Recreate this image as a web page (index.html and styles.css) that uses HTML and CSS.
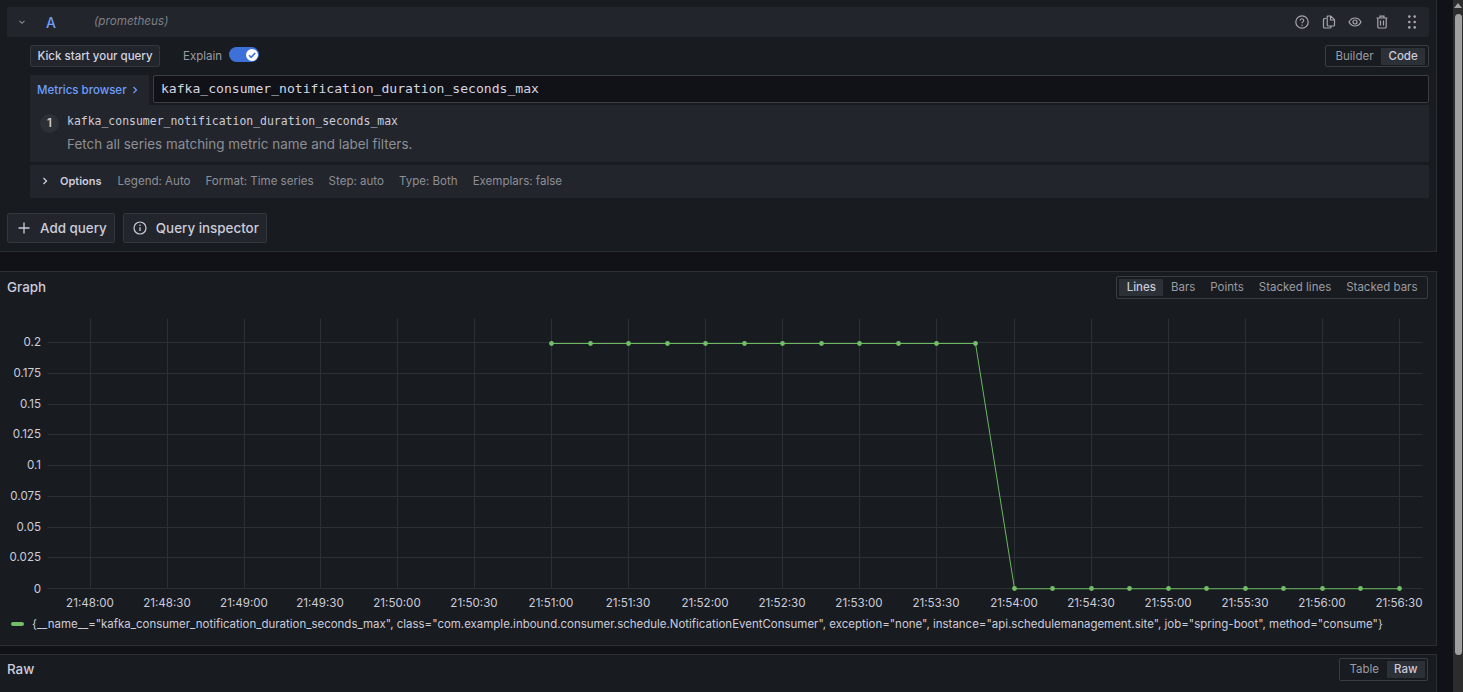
FILE: index.html
```html
<!DOCTYPE html>
<html lang="en">
<head>
<meta charset="utf-8">
<title>Explore</title>
<link rel="stylesheet" href="styles.css">
</head>
<body>
<div class="page">
  <main class="main">
    <section class="editor">
      <div class="query-head">
        <svg class="chev" viewBox="0 0 10 10"><path d="M2.500 3.800 5 6.300 7.500 3.800" fill="none" stroke="#8e9097" stroke-width="1.100"/></svg>
        <span class="ref">A</span>
        <span class="ds">(prometheus)</span>
        <div class="head-icons">
          <svg class="ic" viewBox="0 0 16 16"><circle cx="8" cy="8" r="6.200" fill="none" stroke="#a5a7ad" stroke-width="1.200"/><path d="M6.300 6.500a1.700 1.700 0 1 1 2.500 1.500c-.5.300-.8.600-.8 1.200" fill="none" stroke="#a5a7ad" stroke-width="1.100"/><circle cx="8" cy="11.200" r=".7" fill="#a5a7ad"/></svg>
          <svg class="ic" viewBox="0 0 16 16"><path d="M6.200 2h3.600l3.700 3.700v5.300a1 1 0 0 1-1 1h-5.300a1 1 0 0 1-1-1V3a1 1 0 0 1 1-1zM9.500 2v4h4" fill="none" stroke="#a5a7ad" stroke-width="1.200"/><path d="M5.200 4.500H3.500a1 1 0 0 0-1 1V13a1 1 0 0 0 1 1h5.500a1 1 0 0 0 1-1v-1" fill="none" stroke="#a5a7ad" stroke-width="1.200"/></svg>
          <svg class="ic" viewBox="0 0 16 16"><path d="M2 8C3.300 5.500 5.500 4 8 4s4.700 1.500 6 4c-1.300 2.500-3.500 4-6 4S3.300 10.500 2 8z" fill="none" stroke="#a5a7ad" stroke-width="1.200"/><circle cx="8" cy="8" r="2" fill="none" stroke="#a5a7ad" stroke-width="1.200"/></svg>
          <svg class="ic" viewBox="0 0 16 16"><path d="M2.500 4h11M6 4V2.200h4V4M3.800 4v9a1 1 0 0 0 1 1h6.400a1 1 0 0 0 1-1V4M6.500 6.500v5M9.500 6.500v5" fill="none" stroke="#a5a7ad" stroke-width="1.200"/></svg>
          <svg class="ic grip" viewBox="0 0 16 16"><g fill="#a5a7ad"><circle cx="5.300" cy="2.600" r="1.300"/><circle cx="10.700" cy="2.600" r="1.300"/><circle cx="5.300" cy="8" r="1.300"/><circle cx="10.700" cy="8" r="1.300"/><circle cx="5.300" cy="13.400" r="1.300"/><circle cx="10.700" cy="13.400" r="1.300"/></g></svg>
        </div>
      </div>
      <div class="query-body">
        <div class="toolbar">
          <button class="kick">Kick start your query</button>
          <span class="explain">Explain</span>
          <span class="toggle"><span class="knob"><svg viewBox="0 0 10 10"><path d="M2.500 5.200 4.300 7 7.700 3.300" fill="none" stroke="#3d71d9" stroke-width="1.400"/></svg></span></span>
          <div class="radio builder-radio">
            <span class="opt">Builder</span>
            <span class="opt on">Code</span>
          </div>
        </div>
        <div class="input-row">
          <div class="metrics">Metrics browser<svg viewBox="0 0 10 10"><path d="M3.500 2 6.500 5 3.500 8" fill="none" stroke="#6e9fff" stroke-width="1.200"/></svg></div>
          <div class="input">kafka_consumer_notification_duration_seconds_max</div>
        </div>
        <div class="hints">
          <span class="num">1</span>
          <div class="hint-text">
            <div class="hint-code">kafka_consumer_notification_duration_seconds_max</div>
            <div class="hint-desc">Fetch all series matching metric name and label filters.</div>
          </div>
        </div>
        <div class="options">
          <svg class="opt-chev" viewBox="0 0 10 10"><path d="M3.500 2 6.500 5 3.500 8" fill="none" stroke="#ccccdc" stroke-width="1.300"/></svg>
          <b>Options</b>
          <span>Legend: Auto</span>
          <span>Format: Time series</span>
          <span>Step: auto</span>
          <span>Type: Both</span>
          <span>Exemplars: false</span>
        </div>
      </div>
      <div class="actions">
        <button class="action"><svg viewBox="0 0 16 16"><path d="M8 2.500v11M2.500 8h11" fill="none" stroke="#ccccdc" stroke-width="1.300"/></svg>Add query</button>
        <button class="action"><svg viewBox="0 0 16 16"><circle cx="8" cy="8" r="6" fill="none" stroke="#ccccdc" stroke-width="1.200"/><path d="M8 7.300v3.700" stroke="#ccccdc" stroke-width="1.300"/><circle cx="8" cy="5.200" r=".8" fill="#ccccdc"/></svg>Query inspector</button>
      </div>
    </section>

    <section class="panel graph">
      <div class="panel-head">
        <h2>Graph</h2>
        <div class="radio">
          <span class="opt on">Lines</span>
          <span class="opt">Bars</span>
          <span class="opt">Points</span>
          <span class="opt">Stacked lines</span>
          <span class="opt">Stacked bars</span>
        </div>
      </div>
      <svg class="chart" viewBox="0 0 1436 310" width="1436" height="310">
        <g class="grid">
          <path d="M90 18V288M167 18V288M244 18V288M320 18V288M397 18V288M474 18V288M551 18V288M628 18V288M705 18V288M782 18V288M859 18V288M936 18V288M1014 18V288M1091 18V288M1168 18V288M1245 18V288M1322 18V288M1399 18V288"/>
          <path d="M47 42H1422M47 73H1422M47 104H1422M47 134H1422M47 165H1422M47 196H1422M47 227H1422M47 257H1422M47 288H1422"/>
        </g>
        <g class="ylab">
          <text x="41" y="46">0.2</text>
          <text x="41" y="77">0.175</text>
          <text x="41" y="108">0.15</text>
          <text x="41" y="138">0.125</text>
          <text x="41" y="169">0.1</text>
          <text x="41" y="200">0.075</text>
          <text x="41" y="231">0.05</text>
          <text x="41" y="261">0.025</text>
          <text x="41" y="293">0</text>
        </g>
        <g class="xlab">
          <text x="90" y="307">21:48:00</text>
          <text x="167" y="307">21:48:30</text>
          <text x="244" y="307">21:49:00</text>
          <text x="320" y="307">21:49:30</text>
          <text x="397" y="307">21:50:00</text>
          <text x="474" y="307">21:50:30</text>
          <text x="551" y="307">21:51:00</text>
          <text x="628" y="307">21:51:30</text>
          <text x="705" y="307">21:52:00</text>
          <text x="782" y="307">21:52:30</text>
          <text x="859" y="307">21:53:00</text>
          <text x="936" y="307">21:53:30</text>
          <text x="1014" y="307">21:54:00</text>
          <text x="1091" y="307">21:54:30</text>
          <text x="1168" y="307">21:55:00</text>
          <text x="1245" y="307">21:55:30</text>
          <text x="1322" y="307">21:56:00</text>
          <text x="1399" y="307">21:56:30</text>
        </g>
        <g class="plot">
          <path class="series" d="M551 43H975L1014 288.250H1399"/>
          <g class="dots">
            <circle cx="551" cy="43" r="2.400"/><circle cx="590" cy="43" r="2.400"/><circle cx="628" cy="43" r="2.400"/><circle cx="667" cy="43" r="2.400"/><circle cx="705" cy="43" r="2.400"/><circle cx="744" cy="43" r="2.400"/><circle cx="782" cy="43" r="2.400"/><circle cx="821" cy="43" r="2.400"/><circle cx="859" cy="43" r="2.400"/><circle cx="898" cy="43" r="2.400"/><circle cx="936" cy="43" r="2.400"/><circle cx="975" cy="43" r="2.400"/>
            <circle cx="1014" cy="288" r="2.400"/><circle cx="1052" cy="288" r="2.400"/><circle cx="1091" cy="288" r="2.400"/><circle cx="1129" cy="288" r="2.400"/><circle cx="1168" cy="288" r="2.400"/><circle cx="1206" cy="288" r="2.400"/><circle cx="1245" cy="288" r="2.400"/><circle cx="1283" cy="288" r="2.400"/><circle cx="1322" cy="288" r="2.400"/><circle cx="1360" cy="288" r="2.400"/><circle cx="1399" cy="288" r="2.400"/>
          </g>
        </g>
      </svg>
      <div class="legend"><i class="swatch"></i><span>{__name__="kafka_consumer_notification_duration_seconds_max", class="com.example.inbound.consumer.schedule.NotificationEventConsumer", exception="none", instance="api.schedulemanagement.site", job="spring-boot", method="consume"}</span></div>
    </section>

    <section class="panel raw">
      <div class="panel-head raw-head">
        <h2>Raw</h2>
        <div class="radio">
          <span class="opt">Table</span>
          <span class="opt on">Raw</span>
        </div>
      </div>
    </section>
  </main>
  <div class="scrollbar"><span class="arrow"></span><span class="thumb"></span></div>
</div>
</body>
</html>
```

FILE: styles.css
```css
* { box-sizing: border-box; }
html, body { margin: 0; height: 100%; overflow: hidden; background: #111217; }
body { font-family: Inter, "Noto Sans", sans-serif; font-size: 12px; color: #ccccdc; }
button { font: inherit; color: inherit; }
.page { display: flex; height: 692px; }
.main { width: 1437px; flex: none; }
.scrollbar { width: 10px; margin-left: 16px; background: #2c2c2c; display: flex; flex-direction: column; align-items: center; }
.arrow { margin-top: 3px; width: 0; height: 0; border-left: 4px solid transparent; border-right: 4px solid transparent; border-bottom: 5px solid #a3a3a3; }
.thumb { margin-top: 6px; width: 7px; height: 641px; border-radius: 4px; background: #9f9f9f; }

.editor { height: 252px; background: #181b1f; border-right: 1px solid #2b2e33; border-bottom: 1px solid #2b2e33; padding: 7px 7px 0; }
.query-head { height: 30px; background: #22252b; border-radius: 2px; display: flex; align-items: center; padding-left: 10px; }
.chev { width: 10px; height: 10px; }
.ref { margin-left: 19px; width: 30px; color: #6e9fff; font-size: 14px; font-weight: 500; }
.ds { margin-left: 18px; margin-top: -2px; font-style: italic; color: #7e8088; font-size: 11.700px; }
.head-icons { margin-left: auto; display: flex; align-items: center; gap: 10.500px; padding-right: 9px; }
.ic { width: 16px; height: 16px; display: block; }
.grip { margin-left: 4px; }

.query-body { padding-left: 23px; }
.toolbar { margin-top: 8px; height: 22px; display: flex; align-items: center; }
.kick { height: 22px; padding: 0 6px; width: 130px; background: #22252b; border: 1px solid #34373d; border-radius: 2px; font-weight: 500; font-size: 11.500px; color: #d4d4e0; white-space: nowrap; }
.explain { margin-left: 23px; color: #9a9ca3; font-size: 11.500px; }
.toggle { margin-left: 7px; width: 30px; height: 15px; border-radius: 8px; background: #3d71d9; position: relative; margin-top: -3px; }
.knob { position: absolute; right: 1px; top: 1.500px; width: 12px; height: 12px; border-radius: 50%; background: #fff; }
.knob svg { display: block; width: 12px; height: 12px; }
.radio { margin-left: auto; height: 22px; display: flex; align-items: center; padding: 0 2px; border: 1px solid #3a3d43; border-radius: 2px; color: #9a9ca3; font-size: 11.500px; }
.opt { height: 17px; line-height: 17px; padding: 0 7.500px; white-space: nowrap; }
.opt.on { background: #2c3037; color: #ccccdc; font-weight: 500; }
.builder-radio { width: 104px; }

.input-row { margin-top: 8px; height: 30px; display: flex; align-items: flex-start; }
.metrics { width: 119px; height: 30px; background: #22252b; color: #6e9fff; font-size: 11.500px; font-weight: 500; display: flex; align-items: center; padding-left: 7px; white-space: nowrap; }
.metrics svg { width: 10px; height: 10px; margin-left: 3px; }
.input { margin-left: 4px; flex: 1; height: 28px; background: #111217; border: 1px solid #3a3d43; border-radius: 2px; font-family: "DejaVu Sans Mono", monospace; font-size: 13.080px; line-height: 26px; padding-left: 7px; color: #d5d5e0; }
.hints { height: 57px; background: #22252b; display: flex; padding: 9px 0 0 10px; }
.num { width: 19px; height: 19px; border-radius: 50%; background: #2c3037; text-align: center; line-height: 19px; font-weight: 600; font-size: 11.500px; }
.hint-text { margin-left: 8px; }
.hint-code { font-family: "DejaVu Sans Mono", monospace; font-size: 11.460px; line-height: 14px; color: #ccccdc; }
.hint-desc { margin-top: 8px; color: #8d8f96; font-size: 13.440px; line-height: 16px; white-space: nowrap; }
.options { margin-top: 3px; height: 33px; padding: 0 0 1px 10px; background: #22252b; display: flex; align-items: center; color: #8d8f96; font-size: 11.560px; gap: 15px; white-space: nowrap; }
.options b { font-weight: 600; color: #ccccdc; margin: 0 1px 0 -5px; font-size: 11px; }
.opt-chev { width: 10px; height: 10px; }
.actions { margin-top: 15px; display: flex; gap: 8px; }
.action { height: 30px; padding: 0 7px 0 8px; background: #22252b; border: 1px solid #34373d; border-radius: 2px; display: flex; align-items: center; gap: 8px; font-weight: 500; font-size: 13.400px; white-space: nowrap; }
.action svg { width: 16px; height: 16px; }

.panel { background: #181b1f; border: 1px solid #2b2e33; border-left: 0; }
.graph { margin-top: 19px; height: 375px; }
.panel-head { display: flex; align-items: center; height: 31px; padding: 0 8px 0 7px; }
.panel-head h2 { margin: -2px 0 0; font-size: 13.400px; font-weight: 500; color: #ccccdc; }
.panel-head .radio { height: 23px; }
.chart { display: block; margin-top: -3px; }
.grid { transform: translate(0.5px, 0.5px); }
.grid path { stroke: #2c2f34; stroke-width: 1; fill: none; }
.ylab text { fill: #ccccdc; font-size: 11.600px; text-anchor: end; }
.xlab text { fill: #ccccdc; font-size: 11.600px; text-anchor: middle; }
.plot { transform: translate(0.5px, 0.5px); }
.series { fill: none; stroke: #6ab85f; stroke-width: 1; }
.dots circle { fill: #73bf69; }
.legend { display: flex; align-items: center; height: 18px; padding-left: 11px; font-size: 11.480px; color: #ccccdc; white-space: nowrap; margin-top: 5px; }
.swatch { flex: none; width: 13px; height: 4px; border-radius: 2px; background: #73bf69; margin-right: 8px; }
.raw { margin-top: 8px; height: 60px; border-bottom: 0; }
.raw-head { height: 29px; }
```
